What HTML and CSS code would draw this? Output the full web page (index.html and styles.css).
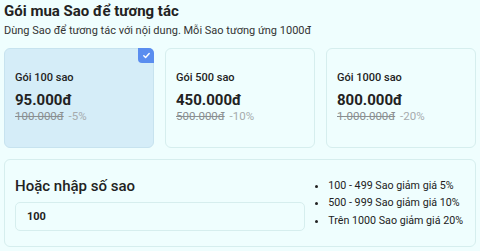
FILE: index.html
```html
<!doctype html>
<html>
<head>
	<meta name="viewport" content="width=device-width, initial-scale=1.0">
	<title>Gói mua Sao</title>
	<link rel="stylesheet" href="styles.css">
</head>
<body>
	<div class="page">
		<h1>Gói mua Sao để tương tác</h1>
		<p class="sub">Dùng Sao để tương tác với nội dung. Mỗi Sao tương ứng 1000đ</p>

		<div class="packs">
			<div class="pack active">
				<span class="check">
					<svg width="9" height="9" viewBox="0 0 10 10"><path d="M2 5.2l2 2 4-4.4" fill="none" stroke="#fff" stroke-width="1.6" stroke-linecap="round" stroke-linejoin="round"/></svg>
				</span>
				<div class="pack-name">Gói 100 sao</div>
				<div class="pack-price">95.000đ</div>
				<div class="pack-old"><s>100.000đ</s> <span>-5%</span></div>
			</div>
			<div class="pack">
				<div class="pack-name">Gói 500 sao</div>
				<div class="pack-price">450.000đ</div>
				<div class="pack-old"><s>500.000đ</s> <span>-10%</span></div>
			</div>
			<div class="pack">
				<div class="pack-name">Gói 1000 sao</div>
				<div class="pack-price">800.000đ</div>
				<div class="pack-old"><s>1.000.000đ</s> <span>-20%</span></div>
			</div>
		</div>

		<div class="custom">
			<div class="custom-left">
				<h2>Hoặc nhập số sao</h2>
				<input type="text" value="100" />
			</div>
			<ul class="rules">
				<li>100 - 499 Sao giảm giá 5%</li>
				<li>500 - 999 Sao giảm giá 10%</li>
				<li>Trên 1000 Sao giảm giá 20%</li>
			</ul>
		</div>
	</div>
</body>
</html>
```

FILE: styles.css
```css
* {
	box-sizing: border-box;
}
body {
	margin: 0;
	background: #effefe;
	font-family: Roboto, "Noto Sans", sans-serif;
	color: #222;
}
.page {
	padding: 0 4px;
}
h1 {
	margin: 0;
	padding-top: 2px;
	font-size: 15px;
	font-weight: 700;
	line-height: 18px;
}
.sub {
	margin: 3px 0 0 0;
	font-size: 11px;
	line-height: 15px;
	color: #333;
}
.packs {
	display: grid;
	grid-template-columns: repeat(3, 1fr);
	column-gap: 11px;
	margin-top: 10px;
}
.pack {
	position: relative;
	height: 100px;
	padding: 22px 10px 0 10px;
	border: 1px solid #d6eeee;
	border-radius: 6px;
	background: #effefe;
}
.pack.active {
	background: #d5edf8;
	border-color: #c7e3ef;
}
.check {
	position: absolute;
	top: -1px;
	right: -1px;
	width: 16px;
	height: 15px;
	border-radius: 0 5px 0 4px;
	background: #5a8def;
	display: flex;
	align-items: center;
	justify-content: center;
}
.pack-name {
	font-size: 11px;
	line-height: 14px;
	font-weight: 500;
}
.pack-price {
	margin-top: 6px;
	font-size: 15px;
	line-height: 18px;
	font-weight: 700;
}
.pack-old {
	font-size: 11.5px;
	line-height: 15px;
	color: #8a8f91;
}
.pack-old span {
	color: #a6abad;
	margin-left: 2px;
}
.custom {
	display: flex;
	align-items: center;
	gap: 9px;
	margin-top: 11px;
	height: 88px;
	padding: 0 12px 0 10px;
	border: 1px solid #d6eeee;
	border-radius: 6px;
}
.custom-left {
	flex: 1;
}
h2 {
	margin: 0;
	font-size: 15px;
	line-height: 20px;
	font-weight: 500;
}
.custom input {
	display: block;
	width: 100%;
	height: 29px;
	margin-top: 6px;
	padding: 0 11px;
	border: 1px solid #d6eeee;
	border-radius: 5px;
	background: #effefe;
	font-family: Roboto, "Noto Sans", sans-serif;
	font-size: 11px;
	font-weight: 700;
	color: #222;
	outline: none;
}
.rules {
	flex: none;
	margin: 0;
	padding-left: 14px;
	font-size: 10.7px;
	line-height: 17.5px;
}
```
